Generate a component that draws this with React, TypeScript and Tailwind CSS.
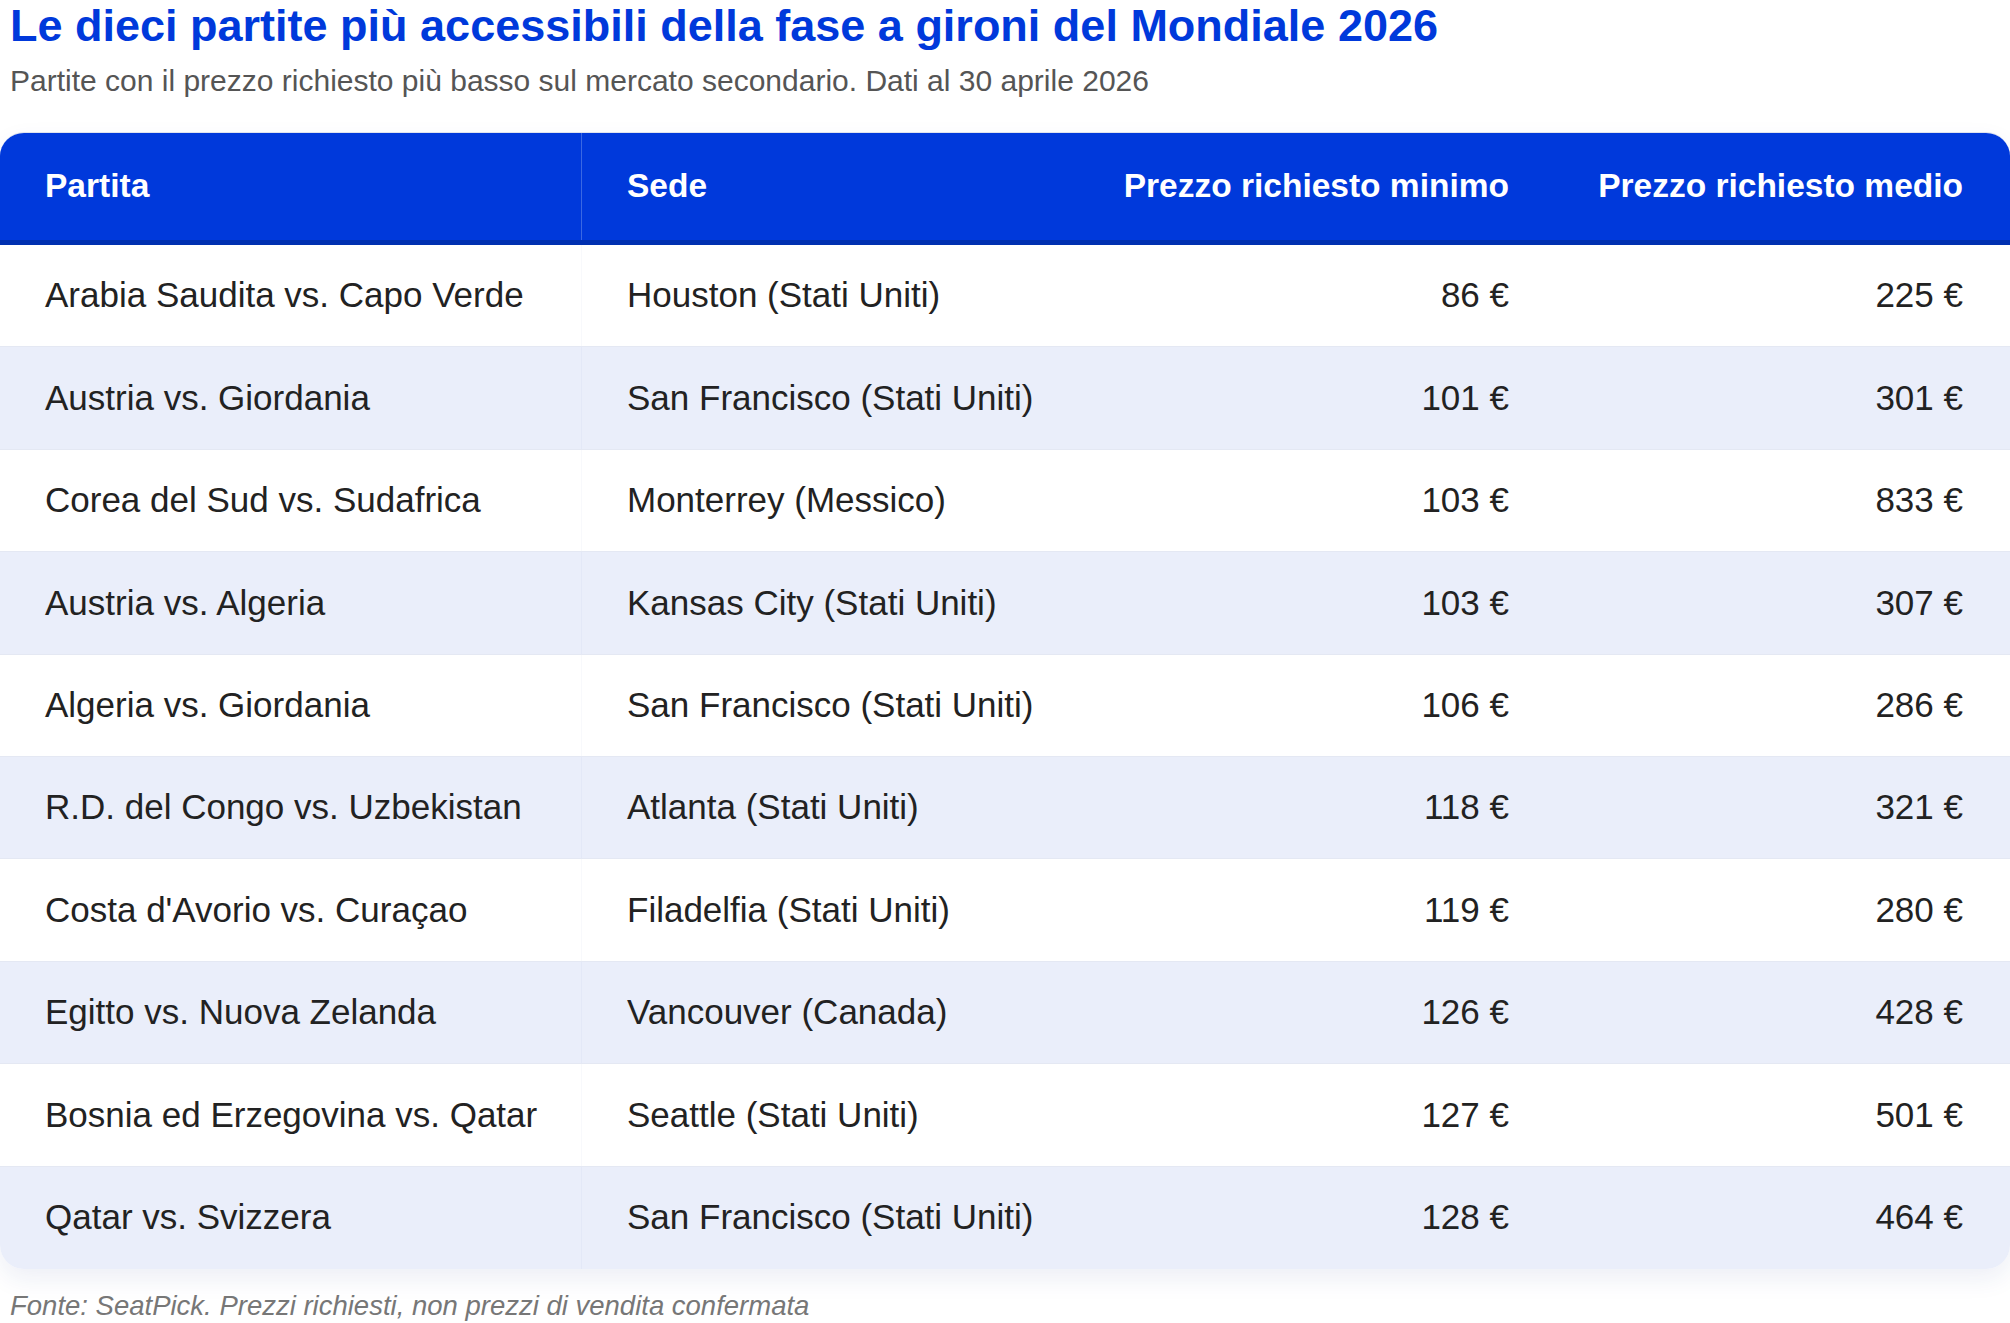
const rows = [
  ["Arabia Saudita vs. Capo Verde", "Houston (Stati Uniti)", "86 €", "225 €"],
  ["Austria vs. Giordania", "San Francisco (Stati Uniti)", "101 €", "301 €"],
  ["Corea del Sud vs. Sudafrica", "Monterrey (Messico)", "103 €", "833 €"],
  ["Austria vs. Algeria", "Kansas City (Stati Uniti)", "103 €", "307 €"],
  ["Algeria vs. Giordania", "San Francisco (Stati Uniti)", "106 €", "286 €"],
  ["R.D. del Congo vs. Uzbekistan", "Atlanta (Stati Uniti)", "118 €", "321 €"],
  ["Costa d'Avorio vs. Curaçao", "Filadelfia (Stati Uniti)", "119 €", "280 €"],
  ["Egitto vs. Nuova Zelanda", "Vancouver (Canada)", "126 €", "428 €"],
  ["Bosnia ed Erzegovina vs. Qatar", "Seattle (Stati Uniti)", "127 €", "501 €"],
  ["Qatar vs. Svizzera", "San Francisco (Stati Uniti)", "128 €", "464 €"],
];

const cols = "grid grid-cols-[582px_497px_475px_456px]";

export default function App() {
  return (
    <div className="w-[2010px] min-h-[1323px] bg-white font-['Liberation_Sans',Arial,sans-serif]">
      <h1 className="px-[10px] pt-[1px] text-[45px] leading-[50px] font-bold text-[#0039db]">
        Le dieci partite più accessibili della fase a gironi del Mondiale 2026
      </h1>
      <p className="px-[10px] mt-[13px] text-[30px] leading-[34px] text-[#555555]">
        Partite con il prezzo richiesto più basso sul mercato secondario. Dati al 30 aprile 2026
      </p>

      <div className="mt-[34px] rounded-[24px] overflow-hidden border-t border-[#dfe3ee] shadow-[0_10px_24px_rgba(20,50,140,0.08)]">
        <div className={`${cols} h-[112px] bg-[#0039db] border-b-[5px] border-[#0030b0] text-white text-[33.5px] font-bold whitespace-nowrap`}>
          <div className="flex items-center px-[45px] border-r border-[#3a68e3]">Partita</div>
          <div className="flex items-center px-[45px]">Sede</div>
          <div className="flex items-center justify-end px-[45px]">Prezzo richiesto minimo</div>
          <div className="flex items-center justify-end pl-[45px] pr-[47px]">Prezzo richiesto medio</div>
        </div>
        {rows.map((r, i) => (
          <div
            key={i}
            className={`${cols} h-[102.4px] text-[35px] text-[#222222] whitespace-nowrap ${i % 2 === 1 ? "bg-[#eaeefa]" : "bg-white"} ${i < rows.length - 1 ? "border-b border-[#e4e8f3]" : ""}`}
          >
            <div className="flex items-center px-[45px] border-r border-[rgba(30,60,160,0.03)]">{r[0]}</div>
            <div className="flex items-center px-[45px]">{r[1]}</div>
            <div className="flex items-center justify-end px-[45px]">{r[2]}</div>
            <div className="flex items-center justify-end pl-[45px] pr-[47px]">{r[3]}</div>
          </div>
        ))}
      </div>

      <p className="px-[10px] mt-[16px] text-[27.5px] italic text-[#777777]">
        Fonte: SeatPick. Prezzi richiesti, non prezzi di vendita confermata
      </p>
    </div>
  );
}
